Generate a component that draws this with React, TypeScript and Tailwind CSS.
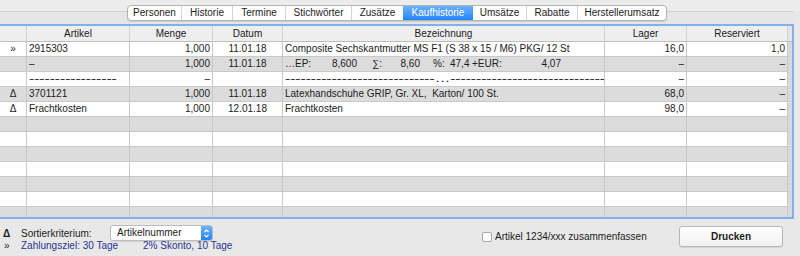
import type { ReactNode } from 'react';

const tabs = [
  { label: 'Personen', w: 'w-[53px]' },
  { label: 'Historie', w: 'w-[51px]' },
  { label: 'Termine', w: 'w-[53px]' },
  { label: 'Stichwörter', w: 'w-[66px]' },
  { label: 'Zusätze', w: 'w-[52px]' },
  { label: 'Kaufhistorie', w: 'w-[70px]', active: true },
  { label: 'Umsätze', w: 'w-[53px]' },
  { label: 'Rabatte', w: 'w-[51px]' },
  { label: 'Herstellerumsatz', w: 'w-[89px]' },
];

const cols = 'grid grid-cols-[27px_103px_83px_70px_322px_82px_101px]';
const cell = 'h-[14px] leading-[14px] border-r border-[#c8c8c8] px-[2px] whitespace-pre overflow-hidden';

type Row = { mark?: string; artikel?: ReactNode; menge?: string; datum?: string; bez?: ReactNode; lager?: string; res?: string };

function PriceLine() {
  return (
    <span className="inline-flex">
      <span className="w-[40px]">…EP:</span>
      <span className="w-[32px] text-right">8,600</span>
      <span className="ml-[15px] w-[20px]">∑:</span>
      <span className="w-[28px] text-right">8,60</span>
      <span className="ml-[13px] w-[17px]">%:</span>
      <span className="w-[18px] text-right">47,4</span>
      <span className="ml-[4px] w-[30px]">+EUR:</span>
      <span className="w-[59px] text-right">4,07</span>
    </span>
  );
}

// hyphens stretched to the wider dash of the original font
function Dashes({ text }: { text: string }) {
  return <span className="inline-block origin-left scale-x-[1.55]">{text}</span>;
}

const rows: Row[] = [
  { mark: '»', artikel: '2915303', menge: '1,000', datum: '11.01.18', bez: 'Composite Sechskantmutter MS F1 (S 38 x 15 / M6) PKG/ 12 St', lager: '16,0', res: '1,0' },
  { artikel: '–', menge: '1,000', datum: '11.01.18', bez: <PriceLine />, lager: '–', res: '–' },
  {
    artikel: <Dashes text="-----------------" />,
    menge: '–',
    bez: <Dashes text="-----------------------------…------------------------------" />,
    lager: '–',
    res: '–',
  },
  { mark: 'Δ', artikel: '3701121', menge: '1,000', datum: '11.01.18', bez: 'Latexhandschuhe GRIP, Gr. XL,  Karton/ 100 St.', lager: '68,0', res: '–' },
  { mark: 'Δ', artikel: 'Frachtkosten', menge: '1,000', datum: '12.01.18', bez: 'Frachtkosten', lager: '98,0', res: '–' },
  {}, {}, {}, {}, {}, {}, {},
];

export default function App() {
  return (
    <div className="w-[800px] h-[256px] overflow-hidden bg-[#e8e8e8] text-[10px] text-[#1c1c1c] font-['Liberation_Sans',Arial,sans-serif]">
      {/* Tab bar */}
      <div className="h-[11px] bg-[#ececec]" />
      <div className="h-[13px] w-[794px] border-t border-[#cfcfcf] bg-[#e6e6e6]">
        <div className="-mt-[7px] ml-[127px] flex h-[16px] w-fit rounded-[4px] border border-[#b4b4b4] bg-white shadow-[0_1px_1px_rgba(0,0,0,0.12)] overflow-hidden">
          {tabs.map((t, i) => (
            <div
              key={t.label}
              className={`${t.w} flex items-center justify-center leading-[14px] ${
                t.active
                  ? 'bg-gradient-to-b from-[#6bb2fb] to-[#2182f8] text-white'
                  : i > 0 && !tabs[i - 1].active ? 'border-l border-[#d4d4d4]' : ''
              }`}
            >
              {t.label}
            </div>
          ))}
        </div>
      </div>

      {/* Table */}
      <div className="w-[794px] border-y-2 border-r-2 border-[#80b2e9] flex">
        <div className="w-[788px]">
          <div className={`${cols} h-[16px] bg-[#eeeeee] border-b border-[#bebebe]`}>
            {['', 'Artikel', 'Menge', 'Datum', 'Bezeichnung', 'Lager', 'Reserviert'].map((h, i) => (
              <div key={i} className="leading-[15px] text-center border-r border-[#d2d2d2]">{h}</div>
            ))}
          </div>
          <div className="h-[175px] overflow-hidden">
            {rows.map((r, i) => (
              <div key={i} className={`${cols} border-b border-[#c9c9c9] ${i % 2 ? 'bg-[#dcdcdc]' : 'bg-white'}`}>
                <div className={`${cell} text-center`}>{r.mark}</div>
                <div className={cell}>{r.artikel}</div>
                <div className={`${cell} text-right`}>{r.menge}</div>
                <div className={`${cell} text-center`}>{r.datum}</div>
                <div className={cell}>{r.bez}</div>
                <div className={`${cell} text-right`}>{r.lager}</div>
                <div className={`${cell} text-right`}>{r.res}</div>
              </div>
            ))}
          </div>
        </div>
        <div className="w-[4px]">
          <div className="h-[16px] bg-[#e4e4e4] border-b border-[#bebebe]" />
          <div className="h-[175px] bg-[#d9d9d9]" />
        </div>
      </div>

      {/* Bottom controls */}
      <div className="flex h-[37px]">
        <div className="w-[482px] pl-[3px] pt-[6px]">
          <div className="flex h-[16px] items-center">
            <span className="w-[18px] font-bold">Δ</span>
            <span className="w-[89px]">Sortierkriterium:</span>
            <div className="flex h-[16px] w-[103px] rounded-[3px] border border-[#bdbdbd] bg-white shadow-[0_1px_1px_rgba(0,0,0,0.1)] overflow-hidden">
              <span className="flex-1 pl-[6px] leading-[14px]">Artikelnummer</span>
              <span className="flex w-[11px] items-center justify-center bg-gradient-to-b from-[#6bb2fb] to-[#2182f8]">
                <svg width="7" height="11" viewBox="0 0 7 11" fill="none" stroke="white" strokeWidth="1.2">
                  <path d="M1.5 4 L3.5 2 L5.5 4" />
                  <path d="M1.5 7 L3.5 9 L5.5 7" />
                </svg>
              </span>
            </div>
          </div>
          <div className="-mt-[1px] flex h-[11px] items-center leading-[11px] text-[#2a3496]">
            <span className="w-[18px] pl-[1px] text-[#1c1c1c]">»</span>
            <span className="w-[122px]">Zahlungsziel: 30 Tage</span>
            <span>2% Skonto, 10 Tage</span>
          </div>
        </div>
        <div className="mt-[12px] flex h-[11px] items-center">
          <span className="h-[10px] w-[10px] rounded-[2px] border border-[#a9a9a9] bg-white" />
          <span className="ml-[3px] leading-[11px]">Artikel 1234/xxx zusammenfassen</span>
        </div>
        <button className="ml-auto mr-[17px] mt-[7px] h-[21px] w-[104px] rounded-[3px] border border-[#b7b7b7] bg-gradient-to-b from-white to-[#f1f1f1] font-bold text-[10px] shadow-[0_1px_1px_rgba(0,0,0,0.1)]">
          Drucken
        </button>
      </div>
    </div>
  );
}
